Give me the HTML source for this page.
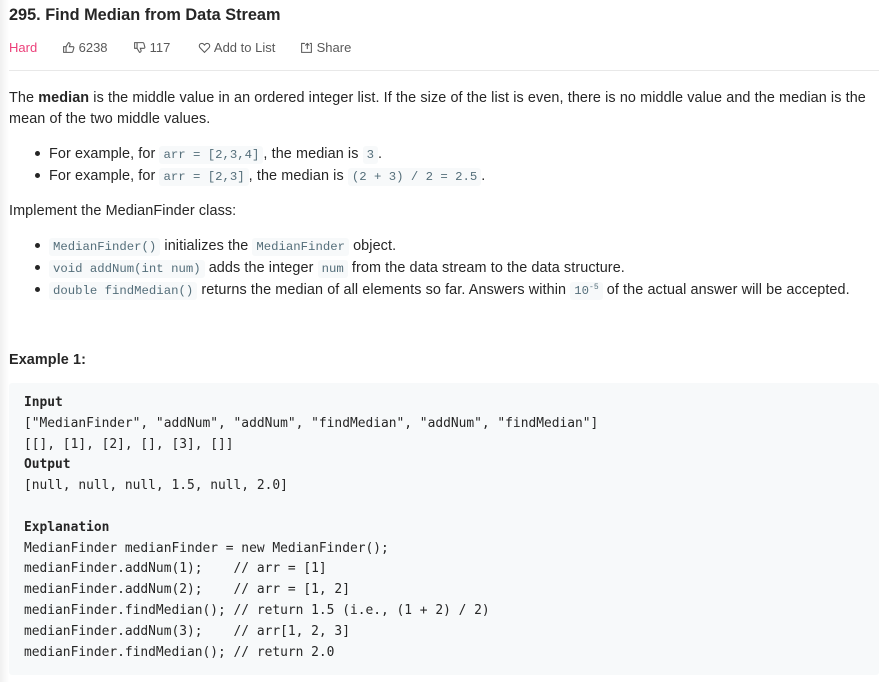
<!DOCTYPE html>
<html><head><style>
body{margin:0;width:879px;height:682px;overflow:hidden;background:#fff;font-family:"Liberation Sans",sans-serif;color:#262626;}
.wrap{position:absolute;left:9px;top:0;width:870px;}
.lstrip{position:absolute;left:0;top:0;width:9px;height:682px;background:linear-gradient(to right,#f0f0f0,#fff);}
h1{position:absolute;top:6px;left:0;margin:0;font-size:16.3px;font-weight:bold;color:#262626;}
.meta{position:absolute;top:40px;left:0;font-size:13px;color:#595959;white-space:nowrap;}
.meta span{position:absolute;top:0;}
.hr{position:absolute;top:70px;left:0;width:870px;height:1px;background:#e8e8e8;}
.t{position:absolute;left:0;font-size:14.4px;line-height:21px;color:#262626;white-space:nowrap;letter-spacing:0.1px;}
code{font-family:"Liberation Mono",monospace;font-size:12.3px;letter-spacing:0;color:#546e7a;background:#f7f9fa;padding:2px 4px;border-radius:3px;}
.dot{display:inline-block;width:5px;height:5px;border-radius:50%;background:#262626;margin:0 9px 2px 26px;vertical-align:middle;}
pre{position:absolute;left:0;top:383px;width:870px;height:292px;margin:0;background:#f7f9fa;font-family:"DejaVu Sans Mono",monospace;font-size:12.9px;line-height:20.8px;color:#262626;padding:10px 15px;box-sizing:border-box;border-radius:3px;}
</style></head><body>
<div class="lstrip"></div>
<div class="wrap">
<h1>295. Find Median from Data Stream</h1>
<div class="meta">
<span style="left:0;color:#ec407a">Hard</span>
<span style="left:53px"><svg width="13" height="13" viewBox="0 0 16 16" style="vertical-align:-2px" fill="none" stroke="#595959" stroke-width="1.3"><path d="M2 7h3v7H2zM5 7l3-5c1 0 2 1 2 2l-1 3h4.5c.8 0 1.3.7 1.1 1.4l-1.3 4.8c-.2.5-.6.8-1.1.8H5"/></svg> 6238</span>
<span style="left:124px"><svg width="13" height="13" viewBox="0 0 16 16" style="vertical-align:-2px" fill="none" stroke="#595959" stroke-width="1.3"><path d="M2 2h3v7H2zM5 9l3 5c1 0 2-1 2-2l-1-3h4.5c.8 0 1.3-.7 1.1-1.4L13.3 2.8c-.2-.5-.6-.8-1.1-.8H5"/></svg> 117</span>
<span style="left:189px"><svg width="13" height="13" viewBox="0 0 16 16" style="vertical-align:-2px" fill="none" stroke="#595959" stroke-width="1.3"><path d="M8 14L2.5 8.3C1 6.8 1.3 4 3.4 3.2 5 2.6 6.8 3.3 8 5c1.2-1.7 3-2.4 4.6-1.8 2.1.8 2.4 3.6.9 5.1z"/></svg> Add to List</span>
<span style="left:291px"><svg width="13" height="13" viewBox="0 0 16 16" style="vertical-align:-2px" fill="none" stroke="#595959" stroke-width="1.3"><path d="M6 3H2v11h12V3h-2M9 10V3M6.5 5.5L9 3l2.5 2.5"/></svg> Share</span>
</div>
<div class="hr"></div>
<div class="t" style="top:88px">The <b>median</b> is the middle value in an ordered integer list. If the size of the list is even, there is no middle value and the median is the</div>
<div class="t" style="top:109px">mean of the two middle values.</div>
<div class="t" style="top:144px"><span class="dot"></span>For example, for <code>arr = [2,3,4]</code>, the median is <code>3</code>.</div>
<div class="t" style="top:166px"><span class="dot"></span>For example, for <code>arr = [2,3]</code>, the median is <code>(2 + 3) / 2 = 2.5</code>.</div>
<div class="t" style="top:201px">Implement the MedianFinder class:</div>
<div class="t" style="top:236px"><span class="dot"></span><code>MedianFinder()</code> initializes the <code>MedianFinder</code> object.</div>
<div class="t" style="top:258px"><span class="dot"></span><code>void addNum(int num)</code> adds the integer <code>num</code> from the data stream to the data structure.</div>
<div class="t" style="top:280px"><span class="dot"></span><code>double findMedian()</code> returns the median of all elements so far. Answers within <code>10<sup style="font-size:8px;line-height:0">-5</sup></code> of the actual answer will be accepted.</div>
<div class="t" style="top:350px"><b>Example 1:</b></div>
<pre><b>Input</b>
["MedianFinder", "addNum", "addNum", "findMedian", "addNum", "findMedian"]
[[], [1], [2], [], [3], []]
<b>Output</b>
[null, null, null, 1.5, null, 2.0]

<b>Explanation</b>
MedianFinder medianFinder = new MedianFinder();
medianFinder.addNum(1);    // arr = [1]
medianFinder.addNum(2);    // arr = [1, 2]
medianFinder.findMedian(); // return 1.5 (i.e., (1 + 2) / 2)
medianFinder.addNum(3);    // arr[1, 2, 3]
medianFinder.findMedian(); // return 2.0</pre>
</div>
</body></html>
